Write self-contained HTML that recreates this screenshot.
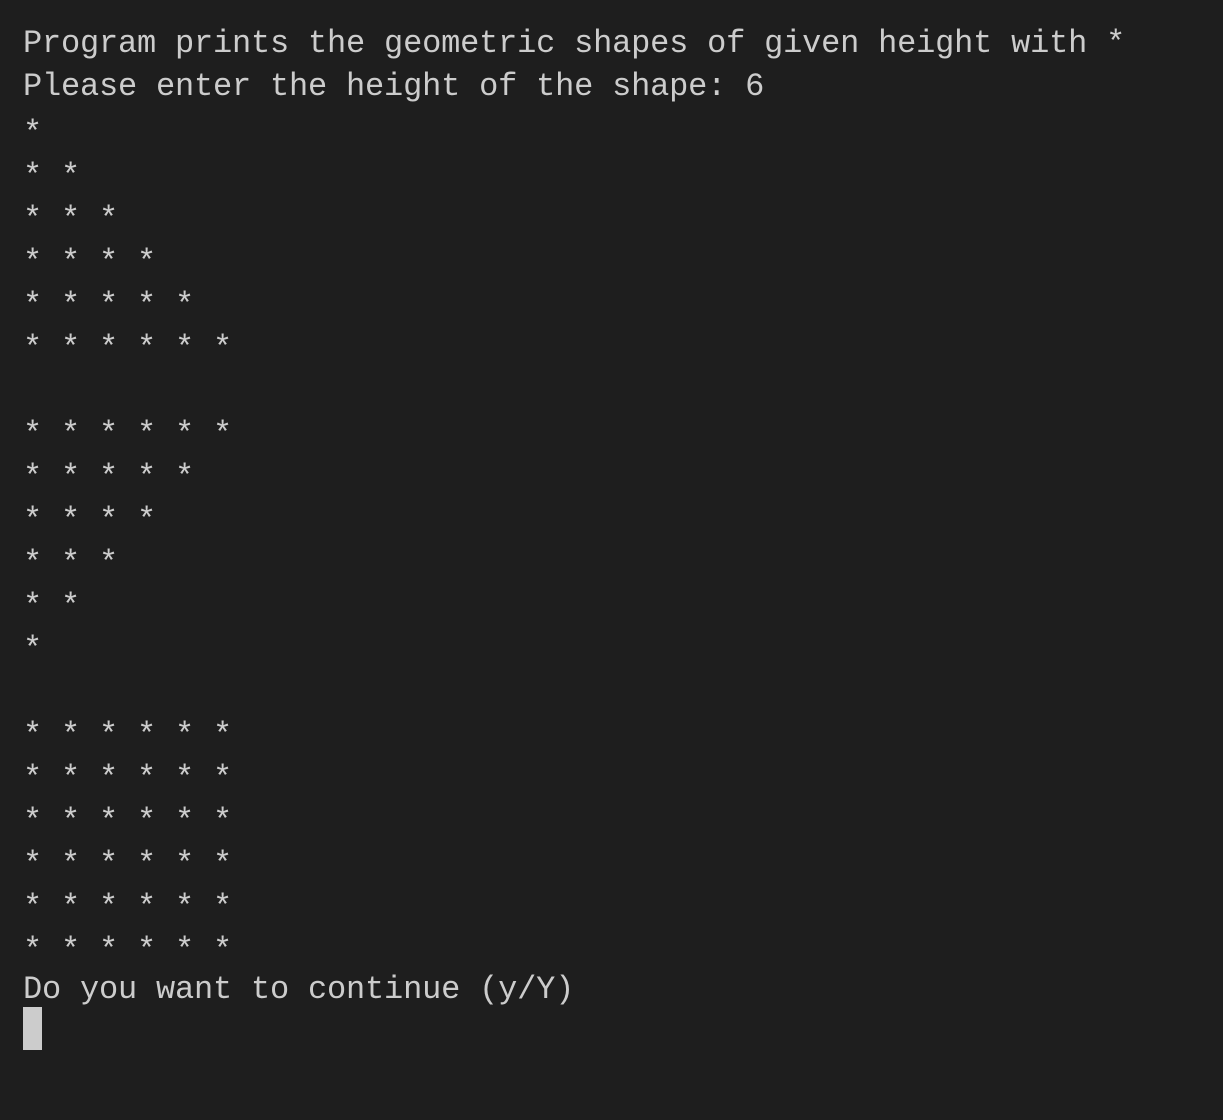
<!DOCTYPE html>
<html><head><meta charset="utf-8"><style>
html,body{margin:0;padding:0;background:#1e1e1e;width:1223px;height:1120px;overflow:hidden}
pre{position:absolute;left:23px;top:22px;margin:0;font-family:"Liberation Mono",monospace;font-size:32px;line-height:43px;color:#cccccc;letter-spacing:-0.2px}
.s{position:relative;top:4px}
.cur{position:absolute;left:23px;top:1007px;width:19px;height:43px;background:#cccccc}
</style></head><body>
<pre>Program prints the geometric shapes of given height with *
Please enter the height of the shape: 6
<span class="s">*
* *
* * *
* * * *
* * * * *
* * * * * *

* * * * * *
* * * * *
* * * *
* * *
* *
*

* * * * * *
* * * * * *
* * * * * *
* * * * * *
* * * * * *
* * * * * *</span>
Do you want to continue (y/Y)</pre>
<div class="cur"></div>
</body></html>
